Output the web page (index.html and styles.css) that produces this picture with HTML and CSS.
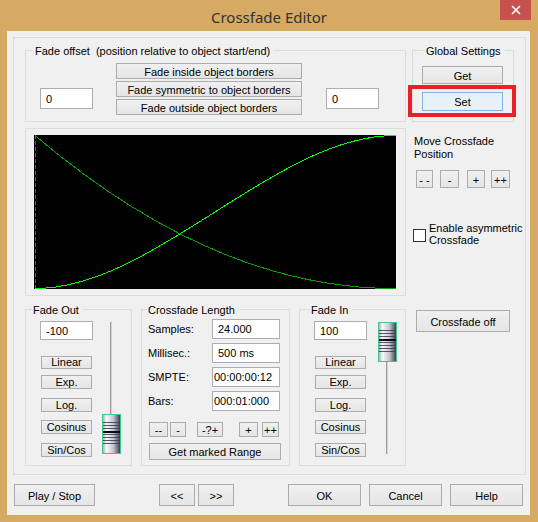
FILE: index.html
```html
<!DOCTYPE html>
<html>
<head>
<meta charset="utf-8">
<title>Crossfade Editor</title>
<link rel="stylesheet" href="styles.css">
</head>
<body>
<div class="window">
  <div class="titlebar">
    <span class="title">Crossfade Editor</span>
    <div class="close"><svg width="10" height="10" viewBox="0 0 10 10"><path d="M1 1 L9 9 M9 1 L1 9" stroke="#fff" stroke-width="1.6" fill="none"/></svg></div>
  </div>
  <div class="client">
    <div class="panel">
      <div class="group g-offset">
        <span class="legend l-offset">Fade offset&nbsp; (position relative to object start/end)</span>
        <div class="offset-body">
          <div class="edit in-offset">0</div>
          <div class="fade-btns">
            <button class="btn fb">Fade inside object borders</button>
            <button class="btn fb">Fade symmetric to object borders</button>
            <button class="btn fb">Fade outside object borders</button>
          </div>
          <div class="edit in-offset in-right">0</div>
        </div>
      </div>

      <div class="group g-global">
        <span class="legend l-global">Global Settings</span>
        <div class="global-body">
          <button class="btn b-get">Get</button>
          <button class="btn b-set">Set</button>
        </div>
        <div class="highlight"></div>
      </div>

      <div class="group g-graph">
        <svg class="graph" width="362" height="154" viewBox="0 0 362 154">
          <rect width="362" height="154" fill="#000"/>
          <line x1="1.5" y1="0" x2="1.5" y2="154" stroke="#00a000" stroke-dasharray="4 2"/>
          <path d="M1,0.5 Q181,153.5 361,153.5 L362,153.5" fill="none" stroke="#0c9c0c" shape-rendering="crispEdges"/>
          <path d="M1,153.5 C121,153.5 241,0.5 361,0.5 L362,0.5" fill="none" stroke="#00ff00" shape-rendering="crispEdges"/>
        </svg>
      </div>

      <div class="move">
        <div class="move-label">Move Crossfade<br>Position</div>
        <div class="move-btns">
          <button class="btn mb mb1">- -</button>
          <button class="btn mb mb2">-</button>
          <button class="btn mb mb3">+</button>
          <button class="btn mb mb4">++</button>
        </div>
        <div class="asym">
          <span class="checkbox"></span>
          <span class="asym-label">Enable asymmetric<br>Crossfade</span>
        </div>
      </div>

      <div class="bottom-groups">
        <div class="group g-fade">
          <span class="legend l-fadeout">Fade Out</span>
          <div class="fade-body">
            <div class="fade-col">
              <div class="edit fade-edit">-100</div>
              <button class="btn ft ft1">Linear</button>
              <button class="btn ft ft2">Exp.</button>
              <button class="btn ft ft3">Log.</button>
              <button class="btn ft ft4">Cosinus</button>
              <button class="btn ft ft5">Sin/Cos</button>
            </div>
            <div class="slider s-out">
              <div class="track"></div>
              <svg class="thumb" width="19" height="40" viewBox="0 0 19 40">
                <defs>
                  <linearGradient id="tg1" x1="0" x2="1" y1="0" y2="0">
                    <stop offset="0" stop-color="#a4a4b0"/>
                    <stop offset="0.22" stop-color="#f7f7fb"/>
                    <stop offset="0.6" stop-color="#c6c6d0"/>
                    <stop offset="0.85" stop-color="#6c6c7a"/>
                    <stop offset="1" stop-color="#34343e"/>
                  </linearGradient>
                </defs>
                <rect x="0.5" y="0.5" width="18" height="39" fill="url(#tg1)" stroke="#3cc88c"/>
                <g fill="#3a3a52" opacity="0.85">
                  <rect x="1" y="8" width="17" height="1"/>
                  <rect x="1" y="11" width="17" height="1"/>
                  <rect x="1" y="14" width="17" height="1"/>
                  <rect x="1" y="20" width="17" height="1"/>
                  <rect x="1" y="23" width="17" height="1"/>
                  <rect x="1" y="26" width="17" height="1"/>
                  <rect x="1" y="29" width="17" height="1"/>
                </g>
                <rect x="1" y="17" width="17" height="2" fill="#0a0a10"/>
              </svg>
            </div>
          </div>
        </div>

        <div class="group g-length">
          <span class="legend l-length">Crossfade Length</span>
          <div class="length-grid">
            <span class="len-label">Samples:</span>
            <div class="edit len-edit">24.000</div>
            <span class="len-label">Millisec.:</span>
            <div class="edit len-edit">500 ms</div>
            <span class="len-label">SMPTE:</span>
            <div class="edit len-edit tight">00:00:00:12</div>
            <span class="len-label">Bars:</span>
            <div class="edit len-edit tight">000:01:000</div>
          </div>
          <div class="len-btns">
            <button class="btn lb lb1">--</button>
            <button class="btn lb lb2">-</button>
            <button class="btn lb lb3">-?+</button>
            <button class="btn lb lb4">+</button>
            <button class="btn lb lb5">++</button>
          </div>
          <button class="btn b-range">Get marked Range</button>
        </div>

        <div class="group g-fade">
          <span class="legend l-fadein">Fade In</span>
          <div class="fade-body">
            <div class="fade-col">
              <div class="edit fade-edit">100</div>
              <button class="btn ft ft1">Linear</button>
              <button class="btn ft ft2">Exp.</button>
              <button class="btn ft ft3">Log.</button>
              <button class="btn ft ft4">Cosinus</button>
              <button class="btn ft ft5">Sin/Cos</button>
            </div>
            <div class="slider s-in">
              <svg class="thumb" width="19" height="40" viewBox="0 0 19 40">
                <defs>
                  <linearGradient id="tg2" x1="0" x2="1" y1="0" y2="0">
                    <stop offset="0" stop-color="#a4a4b0"/>
                    <stop offset="0.22" stop-color="#f7f7fb"/>
                    <stop offset="0.6" stop-color="#c6c6d0"/>
                    <stop offset="0.85" stop-color="#6c6c7a"/>
                    <stop offset="1" stop-color="#34343e"/>
                  </linearGradient>
                </defs>
                <rect x="0.5" y="0.5" width="18" height="39" fill="url(#tg2)" stroke="#3cc88c"/>
                <g fill="#3a3a52" opacity="0.85">
                  <rect x="1" y="8" width="17" height="1"/>
                  <rect x="1" y="11" width="17" height="1"/>
                  <rect x="1" y="14" width="17" height="1"/>
                  <rect x="1" y="20" width="17" height="1"/>
                  <rect x="1" y="23" width="17" height="1"/>
                  <rect x="1" y="26" width="17" height="1"/>
                  <rect x="1" y="29" width="17" height="1"/>
                </g>
                <rect x="1" y="17" width="17" height="2" fill="#0a0a10"/>
              </svg>
              <div class="track"></div>
            </div>
          </div>
        </div>
      </div>

      <div class="right-bottom">
        <button class="btn xoff">Crossfade off</button>
      </div>
    </div>

    <div class="footer">
      <button class="btn fbtn f-play">Play / Stop</button>
      <button class="btn fbtn f-prev">&lt;&lt;</button>
      <button class="btn fbtn f-next">&gt;&gt;</button>
      <button class="btn fbtn f-ok">OK</button>
      <button class="btn fbtn f-cancel">Cancel</button>
      <button class="btn fbtn f-help">Help</button>
    </div>
  </div>
</div>
</body>
</html>
```

FILE: styles.css
```css
* { box-sizing: border-box; }
html, body { margin: 0; padding: 0; }
body {
  width: 538px;
  height: 522px;
  overflow: hidden;
  background: #d6aa62;
  font-family: "Liberation Sans", Arial, sans-serif;
  font-size: 11px;
  color: #000;
}
.window { width: 538px; height: 522px; }

.titlebar {
  position: relative;
  height: 31px;
  display: flex;
  align-items: center;
  justify-content: center;
}
.title {
  font-family: "Noto Sans", "Open Sans", sans-serif;
  font-size: 15px;
  color: #333;
  padding-top: 2px;
}
.close {
  position: absolute;
  top: 0;
  left: 500px;
  width: 31px;
  height: 20px;
  background: #c75050;
  display: flex;
  align-items: center;
  justify-content: center;
}
.close svg { display: block; }

.client {
  margin-left: 7px;
  width: 523px;
  height: 484px;
  background: #f0f0f0;
  padding: 6px 0 0 6px;
}
.panel {
  width: 513px;
  height: 438px;
  border: 1px solid #dcdcdc;
  padding: 12px 0 0 11px;
  display: grid;
  grid-template-columns: 381px 102px;
  grid-template-rows: 72px 168px 164px;
  column-gap: 6px;
  row-gap: 6px;
  align-items: start;
}

.group { border: 1px solid #dcdcdc; }
.legend {
  display: block;
  width: max-content;
  margin-top: -6px;
  margin-bottom: -7px;
  line-height: 13px;
  padding: 0 4px 0 1px;
  background: #f0f0f0;
  white-space: nowrap;
}

.btn {
  font: inherit;
  color: #000;
  margin: 0;
  padding: 1px 0 0 0;
  border: 1px solid #acacac;
  background: linear-gradient(#f0f0f0, #e5e5e5);
  display: flex;
  align-items: center;
  justify-content: center;
  white-space: nowrap;
  overflow: hidden;
}
.edit {
  background: #fff;
  border: 1px solid #abadb3;
  padding-left: 5px;
  display: flex;
  align-items: center;
  white-space: nowrap;
  overflow: hidden;
}

/* Fade offset */
.g-offset { width: 381px; height: 72px; }
.l-offset { margin-left: 8px; }
.offset-body { display: flex; align-items: flex-start; padding-left: 14px; }
.in-offset { width: 53px; height: 21px; margin-top: 37px; }
.in-right { margin-left: 24px; }
.fade-btns {
  display: flex;
  flex-direction: column;
  gap: 2px;
  width: 186px;
  margin: 12px 0 0 23px;
}
.fb { height: 16px; }

/* Global settings */
.g-global { width: 102px; height: 72px; position: relative; }
.l-global { margin-left: 12px; }
.global-body { display: flex; flex-direction: column; padding-left: 9px; }
.b-get { width: 81px; height: 18px; margin-top: 15px; }
.b-set {
  width: 81px;
  height: 19px;
  margin-top: 8px;
  background: #e5f1fb;
  border-color: #7eb4ea;
}
.highlight {
  position: absolute;
  left: -5px;
  top: 34px;
  width: 108px;
  height: 32px;
  border: 4px solid #e8202a;
}

/* Graph */
.g-graph { width: 381px; height: 168px; padding: 6px 0 0 8px; }
.graph { display: block; }

/* Move crossfade */
.move { padding-top: 7px; }
.move-label { margin-left: 2px; line-height: 13px; white-space: nowrap; }
.move-btns { display: flex; margin: 9px 0 0 4px; }
.mb { height: 18px; }
.mb1 { width: 17px; }
.mb2 { width: 19px; margin-left: 7px; }
.mb3 { width: 18px; margin-left: 8px; }
.mb4 { width: 19px; margin-left: 6px; }
.asym { display: flex; align-items: flex-start; margin: 34px 0 0 1px; }
.checkbox {
  width: 13px;
  height: 13px;
  margin-top: 7px;
  border: 1px solid #333;
  background: #fff;
  flex: none;
}
.asym-label { margin-left: 3px; line-height: 12px; white-space: nowrap; }

/* Bottom groups */
.bottom-groups { display: flex; gap: 9px; margin-top: 7px; }
.g-fade { width: 107px; height: 157px; }
.l-fadeout { margin-left: 6px; }
.l-fadein { margin-left: 10px; }
.fade-body { display: flex; align-items: flex-start; padding-left: 14px; }
.fade-col { display: flex; flex-direction: column; align-items: flex-start; }
.fade-edit { width: 53px; height: 19px; margin-top: 11px; }
.ft {
  display: block;
  width: 51px;
  margin-left: 1px;
  padding: 0;
  line-height: 11px;
  text-align: center;
}
.ft1 { height: 13px; margin-top: 16px; }
.ft2 { height: 14px; margin-top: 6px; padding-top: 1px; }
.ft3 { height: 14px; margin-top: 9px; padding-top: 1px; }
.ft4 { height: 14px; margin-top: 8px; }
.ft5 { height: 14px; margin-top: 9px; }

.slider {
  width: 19px;
  height: 132px;
  margin-top: 12px;
  display: flex;
  flex-direction: column;
}
.s-out { margin-left: 9px; }
.s-in { margin-left: 11px; }
.track {
  flex: 1;
  width: 2px;
  margin-left: 8px;
  background: linear-gradient(90deg, #9c9c9c 50%, #d4d4d4 50%);
}
.thumb { display: block; flex: none; }

.g-length { width: 149px; height: 157px; }
.l-length { margin-left: 5px; }
.length-grid {
  display: grid;
  grid-template-columns: 64px 68px;
  grid-auto-rows: 20px;
  row-gap: 4px;
  align-items: center;
  padding: 9px 0 0 6px;
}
.len-edit { height: 20px; }
.tight { padding-left: 1px; }
.len-btns { display: flex; margin: 11px 0 0 7px; }
.lb { height: 15px; }
.lb1 { width: 19px; }
.lb2 { width: 16px; margin-left: 2px; }
.lb3 { width: 26px; margin-left: 11px; }
.lb4 { width: 19px; margin-left: 16px; }
.lb5 { width: 17px; margin-left: 4px; }
.b-range { width: 132px; height: 17px; margin: 6px 0 0 7px; }

.right-bottom { margin-top: 8px; }
.xoff { width: 94px; height: 22px; margin-left: 4px; }

/* Footer */
.footer { display: flex; margin: 9px 0 0 1px; }
.fbtn { height: 22px; }
.f-play { width: 81px; }
.f-prev { width: 36px; margin-left: 64px; }
.f-next { width: 36px; margin-left: 3px; }
.f-ok { width: 73px; margin-left: 54px; }
.f-cancel { width: 73px; margin-left: 8px; }
.f-help { width: 73px; margin-left: 8px; }
```
